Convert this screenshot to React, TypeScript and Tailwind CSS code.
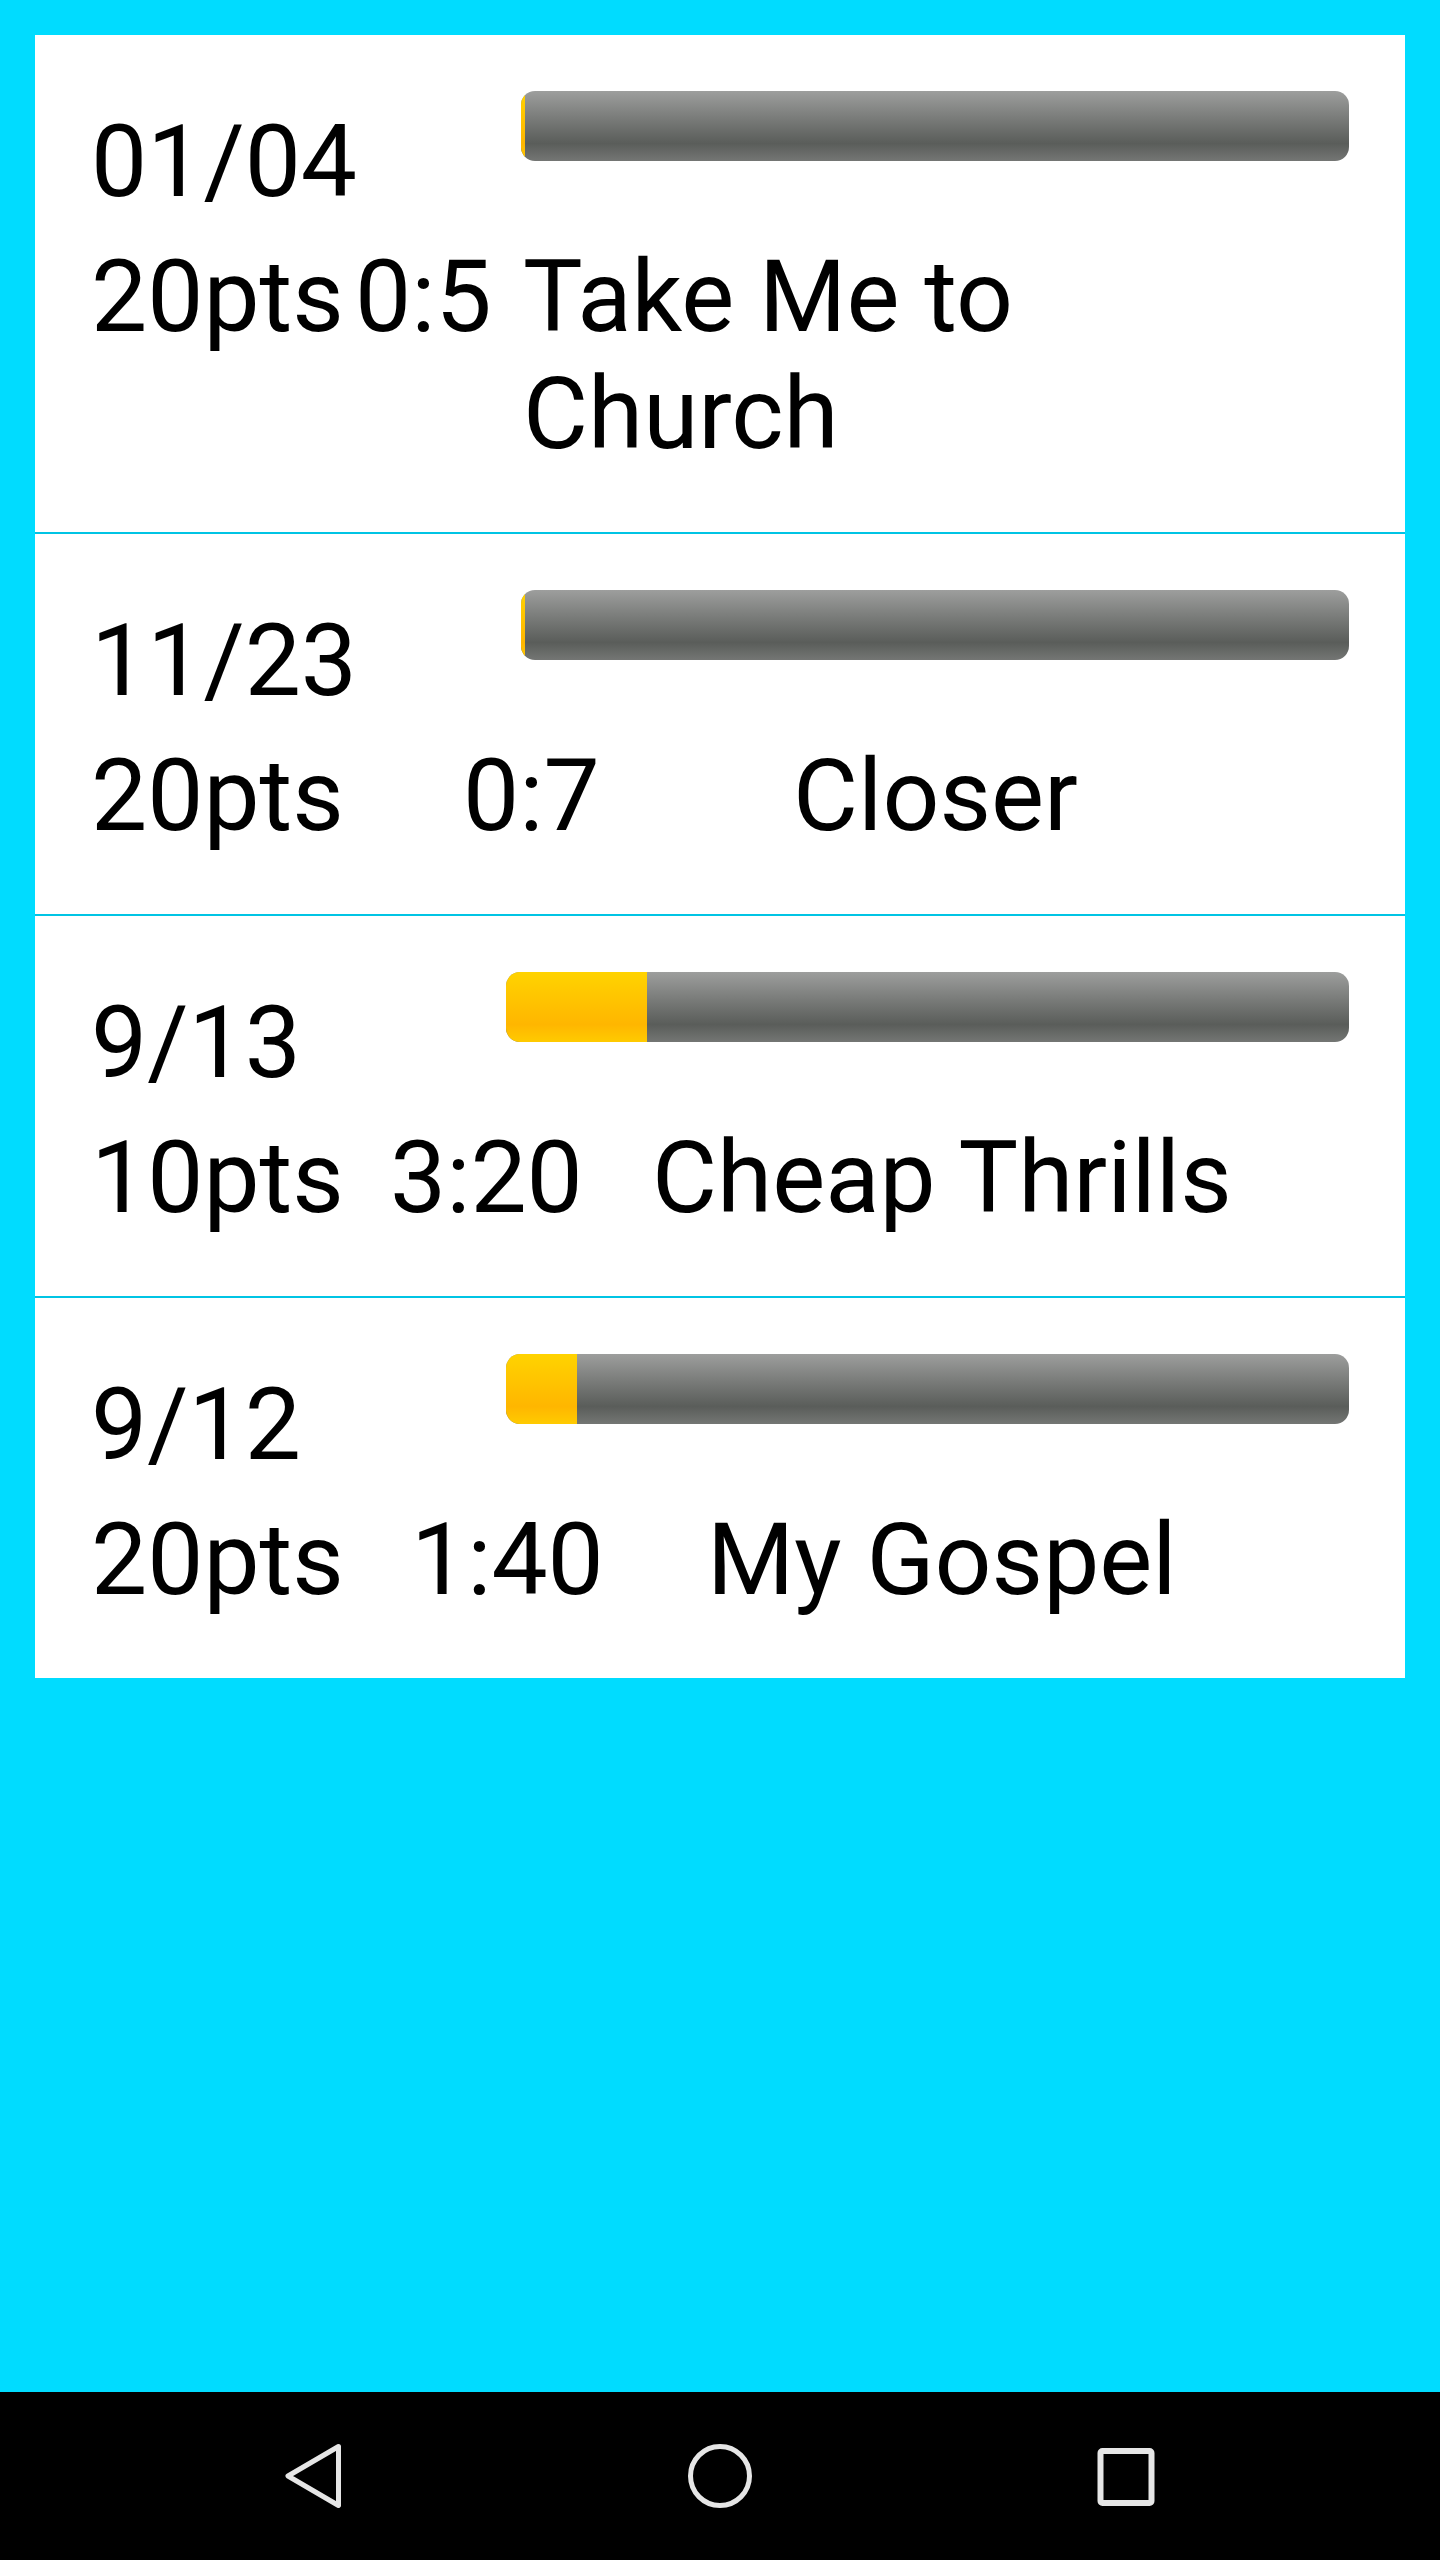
import React from "react";

type Entry = {
  date: string;
  pts: string;
  time: string;
  title: string;
  progress: number;
  dateCol: string;
  ptsCol: string;
  timeCol: string;
  titleCol: string;
};

const entries: Entry[] = [
  {
    date: "01/04",
    pts: "20pts",
    time: "0:5",
    title: "Take Me to Church",
    progress: 0.5,
    dateCol: "w-[430px]",
    ptsCol: "w-[264px]",
    timeCol: "w-[168px]",
    titleCol: "max-w-[720px]",
  },
  {
    date: "11/23",
    pts: "20pts",
    time: "0:7",
    title: "Closer",
    progress: 0.5,
    dateCol: "w-[430px]",
    ptsCol: "w-[372px]",
    timeCol: "w-[330px]",
    titleCol: "",
  },
  {
    date: "9/13",
    pts: "10pts",
    time: "3:20",
    title: "Cheap Thrills",
    progress: 16.7,
    dateCol: "w-[415px]",
    ptsCol: "w-[299px]",
    timeCol: "w-[262px]",
    titleCol: "",
  },
  {
    date: "9/12",
    pts: "20pts",
    time: "1:40",
    title: "My Gospel",
    progress: 8.4,
    dateCol: "w-[415px]",
    ptsCol: "w-[320px]",
    timeCol: "w-[296px]",
    titleCol: "",
  },
];

const ProgressBar = ({ value }: { value: number }) => (
  <div className="relative h-[70px] flex-1 overflow-hidden rounded-[14px] bg-linear-to-b from-[#9d9e9d] via-[#5a5d5a] via-75% to-[#747674]">
    <div
      className="absolute inset-y-0 left-0 bg-linear-to-b from-[#ffd300] via-[#ffb600] via-75% to-[#ffcb00]"
      style={{ width: `${value}%` }}
    />
  </div>
);

const Row = ({ entry, first }: { entry: Entry; first: boolean }) => (
  <div
    className={
      first
        ? "pl-[56px] pr-[56px] pt-[56px] pb-[60px]"
        : "border-t-2 border-[#00c4e4] pl-[56px] pr-[56px] pt-[56px] pb-[60px]"
    }
  >
    <div className="flex items-start">
      <div className={`${entry.dateCol} mt-[12px] shrink-0`}>{entry.date}</div>
      <ProgressBar value={entry.progress} />
    </div>
    <div className="mt-[18px] flex items-start">
      <div className={`${entry.ptsCol} shrink-0 whitespace-nowrap`}>{entry.pts}</div>
      <div className={`${entry.timeCol} shrink-0 whitespace-nowrap`}>{entry.time}</div>
      <div className={`${entry.titleCol} min-w-0 flex-1`}>{entry.title}</div>
    </div>
  </div>
);

const NavBar = () => (
  <div className="flex h-[168px] shrink-0 items-center justify-center gap-[322px] bg-black">
    {/* back */}
    <svg width="84" height="84" viewBox="0 0 84 84" className="-ml-[2px]">
      <path
        d="M67.5 12.5 L17 42 L67.5 71.5 Z"
        fill="none"
        stroke="#e6e6e6"
        strokeWidth="5"
        strokeLinejoin="round"
      />
    </svg>
    {/* home */}
    <svg width="84" height="84" viewBox="0 0 84 84" className="ml-[1px]">
      <circle cx="42" cy="42" r="29.5" fill="none" stroke="#e6e6e6" strokeWidth="5" />
    </svg>
    {/* recents */}
    <svg width="84" height="84" viewBox="0 0 84 84">
      <rect
        x="16.5"
        y="17"
        width="51"
        height="52"
        rx="2"
        fill="none"
        stroke="#e6e6e6"
        strokeWidth="6"
      />
    </svg>
  </div>
);

export default function App() {
  return (
    <div className="flex h-[2560px] flex-col bg-[#00dcff] font-['Roboto',sans-serif] text-black">
      <div className="flex-1 px-[35px] pt-[35px]">
        <div className="bg-white text-[100px] leading-[117px]">
          {entries.map((e, i) => (
            <Row key={e.date} entry={e} first={i === 0} />
          ))}
        </div>
      </div>
      <NavBar />
    </div>
  );
}
